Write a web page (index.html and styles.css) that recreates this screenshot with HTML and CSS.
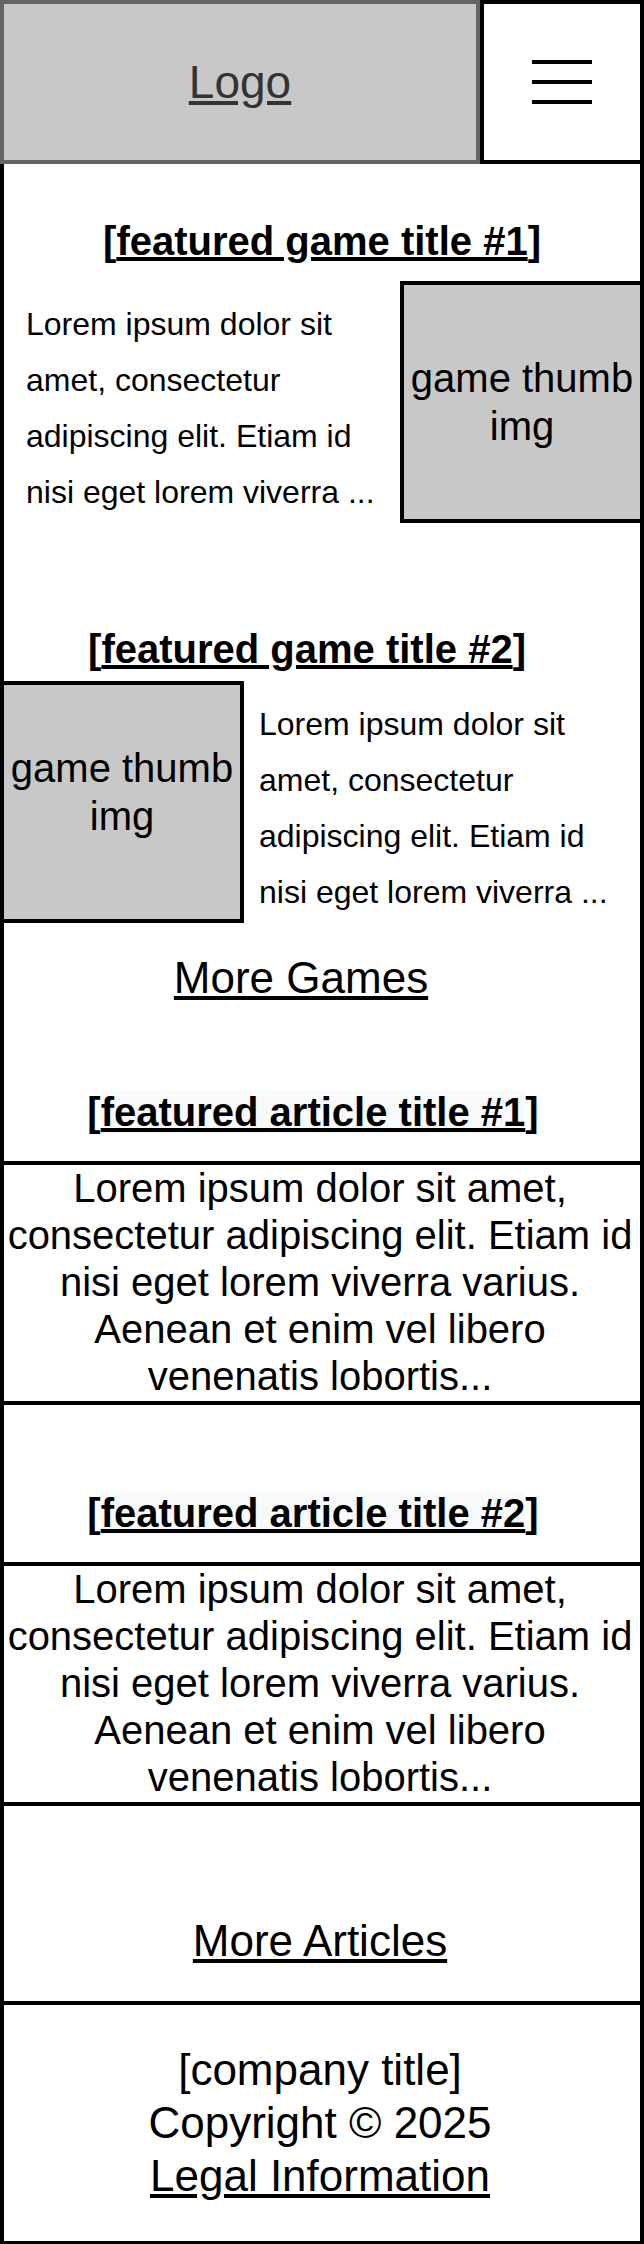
FILE: index.html
```html
<!DOCTYPE html>
<html lang="en">

<head>
    <meta charset="UTF-8">
    <meta name="viewport" content="width=device-width, initial-scale=1.0">
    <title>Games Home - Mobile</title>
    <link rel="stylesheet" href="styles.css">
</head>

<body>

    <header class="top-bar">
        <div class="logo-box">
            <a href="#" class="logo">Logo</a>
        </div>
        <button class="menu-btn" aria-label="Open menu">
            <span></span>
            <span></span>
            <span></span>
        </button>
    </header>

    <main class="page">
        <section class="game">
            <h2 class="section-title">[<a href="#">featured game title #1</a>]</h2>
            <div class="game-row">
                <p class="game-desc">Lorem ipsum dolor sit amet, consectetur adipiscing elit. Etiam id nisi eget lorem viverra ...</p>
                <div class="thumb">game thumb img</div>
            </div>
        </section>

        <section class="game game-alt">
            <h2 class="section-title">[<a href="#">featured game title #2</a>]</h2>
            <div class="game-row">
                <div class="thumb">game thumb img</div>
                <p class="game-desc">Lorem ipsum dolor sit amet, consectetur adipiscing elit. Etiam id nisi eget lorem viverra ...</p>
            </div>
        </section>

        <div class="more more-games">
            <a href="#">More Games</a>
        </div>

        <section class="article">
            <h2 class="section-title">[<a href="#">featured article title #1</a>]</h2>
            <p class="article-body">Lorem ipsum dolor sit amet, consectetur adipiscing elit. Etiam id nisi eget lorem viverra varius. Aenean et enim vel libero venenatis lobortis...</p>
        </section>

        <section class="article">
            <h2 class="section-title">[<a href="#">featured article title #2</a>]</h2>
            <p class="article-body">Lorem ipsum dolor sit amet, consectetur adipiscing elit. Etiam id nisi eget lorem viverra varius. Aenean et enim vel libero venenatis lobortis...</p>
        </section>

        <div class="more more-articles">
            <a href="#">More Articles</a>
        </div>

        <footer class="footer">
            <p>[company title]</p>
            <p>Copyright &copy; 2025</p>
            <p><a href="#">Legal Information</a></p>
        </footer>
    </main>

</body>

</html>
```

FILE: styles.css
```css
* {
    box-sizing: border-box;
    margin: 0;
    padding: 0;
}

body {
    font-family: "Liberation Sans", Arial, sans-serif;
    color: #000;
    background: #fff;
    width: 644px;
}

a {
    color: inherit;
}

/* header */
.top-bar {
    display: flex;
    height: 164px;
}

.logo-box {
    width: 480px;
    display: flex;
    align-items: center;
    justify-content: center;
    background: #c8c8c8;
    border: 4px solid #666;
}

.logo {
    font-size: 46px;
    color: #333;
}

.menu-btn {
    width: 164px;
    display: flex;
    flex-direction: column;
    align-items: center;
    justify-content: center;
    gap: 16px;
    background: #fff;
    border: 4px solid #000;
    cursor: pointer;
}

.menu-btn span {
    display: block;
    width: 60px;
    height: 4px;
    background: #000;
}

/* page body */
.page {
    display: flow-root;
    border: 4px solid #000;
    border-top: none;
}

.section-title {
    font-size: 40px;
    font-weight: bold;
    line-height: 46px;
    text-align: center;
}

.game .section-title {
    margin: 54px 0 17px;
}

.game-alt .section-title {
    margin: 103px 0 9px;
    padding-right: 30px;
}

.game-row {
    display: flex;
    align-items: flex-start;
    margin-right: -4px;
}

.game-alt .game-row {
    margin: 0 0 0 -4px;
}

.game-desc {
    flex: 1;
    font-size: 32px;
    line-height: 56px;
    padding: 15px 0 0 22px;
}

.game-alt .game-desc {
    padding: 15px 10px 0 15px;
}

.thumb {
    flex-shrink: 0;
    width: 244px;
    height: 242px;
    display: flex;
    align-items: center;
    justify-content: center;
    text-align: center;
    background: #c8c8c8;
    border: 4px solid #000;
    font-size: 40px;
    line-height: 48px;
}

.game-alt .thumb {
    padding-bottom: 20px;
}

.more {
    text-align: center;
    font-size: 44px;
    line-height: 1.15;
}

.more-games {
    margin-top: 30px;
    padding-right: 42px;
}

.article .section-title {
    margin: 85px 0 26px;
    padding-right: 18px;
}

.article .section-title a {
    background: #f8f9fa;
}

.article-body {
    border-top: 4px solid #000;
    border-bottom: 4px solid #000;
    padding: 0 7px 0 3px;
    font-size: 40px;
    line-height: 47.2px;
    text-align: center;
}

.more-articles {
    padding: 110px 4px 35px 0;
}

/* footer */
.footer {
    height: 240px;
    display: flex;
    flex-direction: column;
    justify-content: center;
    padding-right: 4px;
    border-top: 4px solid #000;
    font-size: 44px;
    line-height: 52.8px;
    text-align: center;
}
```
